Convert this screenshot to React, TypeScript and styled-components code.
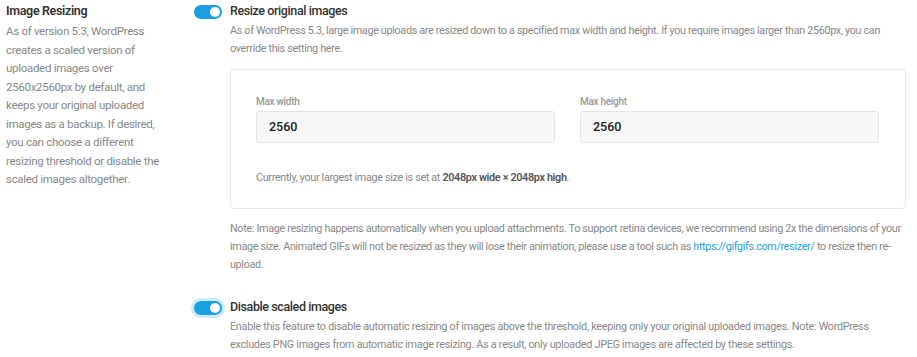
import { createGlobalStyle } from 'styled-components';
import styled from 'styled-components';

const GlobalStyle = createGlobalStyle`
    html, body {
        overflow: hidden;
    }

    body {
        margin: 0;
        background: #fff;
        font-family: Roboto, 'Liberation Sans', sans-serif;
        color: #333;
    }
`;

const Page = styled.div`
    display: flex;
    padding: 1px 11px 0 6px;
`;

const Sidebar = styled.aside`
    width: 188px;
    flex-shrink: 0;
`;

const SideTitle = styled.h2`
    margin: 0 0 1px;
    font-size: 12.5px;
    font-weight: 600;
    letter-spacing: -0.35px;
    line-height: 20px;
    color: #333;
`;

const SideText = styled.p`
    margin: 0;
    width: 166px;
    font-size: 11.5px;
    letter-spacing: -0.3px;
    line-height: 18.5px;
    color: #888;
`;

const Main = styled.main`
    flex: 1;
    display: flex;
    flex-direction: column;
    gap: 22px;
`;

const Setting = styled.section`
    display: grid;
    grid-template-columns: 36px 1fr;
`;

const Toggle = styled.span<{ $focused?: boolean }>`
    position: relative;
    display: block;
    width: 28px;
    height: 14px;
    margin-top: 4px;
    border-radius: 7px;
    background: #1a9fe0;
    box-shadow: ${(p) => (p.$focused ? '0 0 0 3px rgba(26, 159, 224, 0.22)' : 'none')};

    &::after {
        content: '';
        position: absolute;
        right: 2px;
        top: 2px;
        width: 10px;
        height: 10px;
        border-radius: 50%;
        background: #fff;
    }
`;

const Content = styled.div`
    display: flex;
    flex-direction: column;
`;

const Title = styled.h3`
    margin: 0 0 1px;
    font-size: 12.5px;
    font-weight: 500;
    letter-spacing: -0.4px;
    line-height: 20px;
    color: #333;
`;

const Text = styled.p<{ $spacing?: number }>`
    margin: 0;
    font-size: 10.8px;
    letter-spacing: ${(p) => p.$spacing ?? -0.33}px;
    line-height: 18.3px;
    color: #888;

    strong {
        font-weight: 600;
        color: #555;
    }

    a {
        color: #1a9fe0;
        text-decoration: none;
    }
`;

const Box = styled.div`
    margin: 10px 0 11px;
    padding: 25px 26px 21px 25px;
    border: 1px solid #e9e9e9;
    border-radius: 4px;
`;

const Fields = styled.div`
    display: grid;
    grid-template-columns: 1fr 1fr;
    gap: 25px;
    margin-bottom: 26px;
`;

const Field = styled.label`
    display: flex;
    flex-direction: column;
    gap: 2px;
`;

const Label = styled.span`
    font-size: 10px;
    font-weight: 500;
    letter-spacing: -0.3px;
    line-height: 14px;
    color: #999;
`;

const Input = styled.input`
    box-sizing: border-box;
    height: 32px;
    padding: 0 12px;
    border: 1px solid #e4e4e4;
    border-radius: 3px;
    background: #f7f7f7;
    font-family: inherit;
    font-size: 12.5px;
    font-weight: 500;
    color: #222;
    outline: none;
`;

export default function App() {
    return (
        <>
            <GlobalStyle />
            <Page>
                <Sidebar>
                    <SideTitle>Image Resizing</SideTitle>
                    <SideText>
                        As of version 5.3, WordPress creates a scaled version of uploaded images over
                        2560x2560px by default, and keeps your original uploaded images as a backup. If
                        desired, you can choose a different resizing threshold or disable the scaled images
                        altogether.
                    </SideText>
                </Sidebar>
                <Main>
                    <Setting>
                        <Toggle />
                        <Content>
                            <Title>Resize original images</Title>
                            <Text>
                                As of WordPress 5.3, large image uploads are resized down to a specified max width
                                and height. If you require images larger than 2560px, you can override this
                                setting here.
                            </Text>
                            <Box>
                                <Fields>
                                    <Field>
                                        <Label>Max width</Label>
                                        <Input defaultValue="2560" />
                                    </Field>
                                    <Field>
                                        <Label>Max height</Label>
                                        <Input defaultValue="2560" />
                                    </Field>
                                </Fields>
                                <Text>
                                    Currently, your largest image size is set at{' '}
                                    <strong>2048px wide × 2048px high</strong>.
                                </Text>
                            </Box>
                            <Text>
                                Note: Image resizing happens automatically when you upload attachments. To support
                                retina devices, we recommend using 2x the dimensions of your image size. Animated
                                GIFs will not be resized as they will lose their animation, please use a tool such
                                as <a href="#">https://gifgifs.com/resizer/</a> to resize then re-upload.
                            </Text>
                        </Content>
                    </Setting>
                    <Setting>
                        <Toggle $focused />
                        <Content>
                            <Title>Disable scaled images</Title>
                            <Text $spacing={-0.27}>
                                Enable this feature to disable automatic resizing of images above the threshold,
                                keeping only your original uploaded images. Note: WordPress excludes PNG images
                                from automatic image resizing. As a result, only uploaded JPEG images are affected
                                by these settings.
                            </Text>
                        </Content>
                    </Setting>
                </Main>
            </Page>
        </>
    );
}
